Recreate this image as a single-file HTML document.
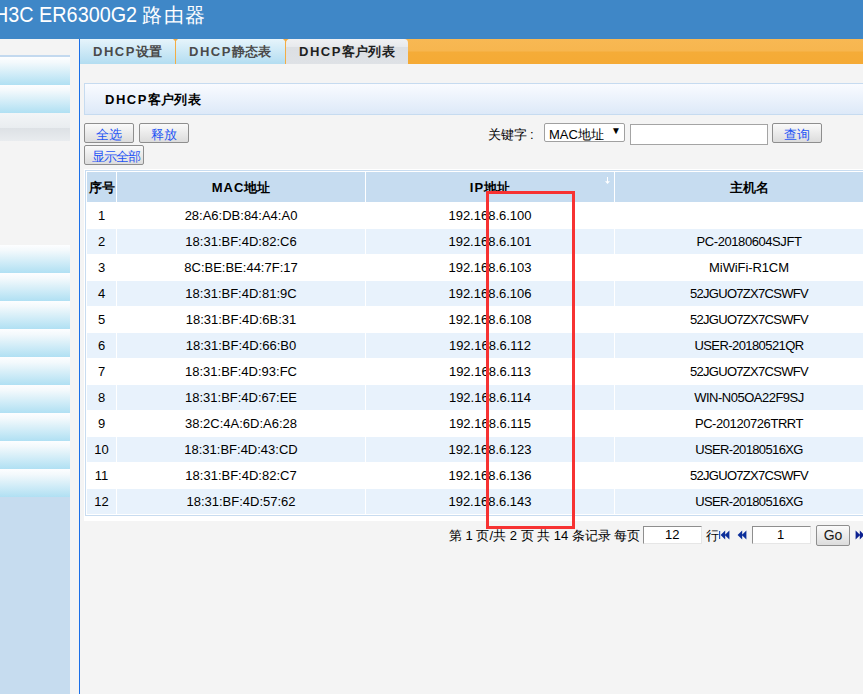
<!DOCTYPE html>
<html><head><meta charset="utf-8">
<style>
*{margin:0;padding:0;box-sizing:border-box}
html,body{width:863px;height:694px;overflow:hidden;background:#f4f4f4;font-family:"Liberation Sans",sans-serif;font-size:12px;color:#000;position:relative}
div{position:absolute}
#hdr{left:0;top:0;width:863px;height:39px;background:#3f87c7;color:#fff;white-space:nowrap;overflow:hidden}
#hdr .lt{position:absolute;left:-6px;top:3px;font-size:22px;line-height:24px;transform-origin:0 0;transform:scaleX(0.90)}
#hdr .cj{position:absolute;left:142px;top:3px;font-size:20px;line-height:24px;letter-spacing:1.5px}
#vline{left:79px;top:39px;width:1px;height:655px;background:#1a6fe8}
.si{left:0;width:70px;height:28px;background:linear-gradient(#fdfeff,#f3f9fc 20%,#b0e0f3)}
#tabbar{left:80px;top:39px;width:783px;height:25px;background:linear-gradient(#f8b853,#f7b64f 48%,#f5ac38 52%,#f5aa35)}
.tab{top:39px;height:25px;background:linear-gradient(#e6f4fb,#b3ddf1)}
.tab.act{background:linear-gradient(#f0f1f3,#e8eaed 30%,#dcdfe3 32%,#dfe2e6);border-radius:4px 4px 0 0}
.tdiv{top:39px;width:1px;height:25px;background:#f3ad45}
.tfl{top:39px;width:5px;height:2px;background:#f3ad45;clip-path:polygon(0 0,100% 0,60% 100%,40% 100%)}
.tt{top:44px;font-weight:bold;font-size:13px;color:#4a4a4a;white-space:nowrap;line-height:16px}
.ls{letter-spacing:1.5px}
.lc{letter-spacing:0.3px}
#sect{left:84px;top:83px;width:790px;height:32px;border:1px solid #c6dbf0;background:linear-gradient(#f9fbff,#dde9f8)}
.btn{height:20px;border:1px solid #8e8e8e;border-radius:2px;background:linear-gradient(#fafafa,#dcdcdc);color:#1f55f5;text-align:center;line-height:18px;font-size:13px;padding-top:2px}
.inp{background:#fff;border:1px solid #a4a4a4}
.inp2{background:#fff;border:1px solid;border-color:#8e8e8e #e6e6e6 #e6e6e6 #8e8e8e}
#wbox{left:84px;top:169px;width:800px;height:352px;background:#fff}
#tbl{left:85px;top:170px;width:800px;border:1px solid #c8dcf0;background:#fff}
table{border-collapse:separate;border-spacing:1px;background:#fff;table-layout:fixed;width:798px}
td,th{height:25px;padding:0;text-align:center;font-size:13px;white-space:nowrap;font-weight:normal}
th{height:30px;background:#c6dcf0;font-weight:bold;font-size:13px;padding-top:2px}
tr.o td{background:#e8f2fc}
#red{left:486px;top:191px;width:89px;height:338px;border:3px solid #f73232}
.pg{top:527px;font-size:13px;white-space:nowrap}
</style></head><body>
<div id="hdr"><span class="lt">H3C ER6300G2</span><span class="cj">路由器</span></div>
<div style="left:0;top:55px;width:70px;height:2px;background:#c3d9ef"></div>
<div class="si" style="top:57px"></div>
<div class="si" style="top:85px"></div>
<div style="left:0;top:113px;width:70px;height:15px;background:linear-gradient(#f3f5f7,#e9edf0)"></div>
<div style="left:0;top:128px;width:70px;height:13px;background:linear-gradient(#dde1e5,#e9ecef)"></div>
<div class="si" style="top:245px"></div><div class="si" style="top:273px"></div><div class="si" style="top:301px"></div><div class="si" style="top:329px"></div><div class="si" style="top:357px"></div><div class="si" style="top:385px"></div><div class="si" style="top:413px"></div><div class="si" style="top:441px"></div><div class="si" style="top:469px"></div>
<div style="left:0;top:497px;width:70px;height:197px;background:#c6dcef"></div>
<div id="vline"></div>
<div id="tabbar"></div>
<div class="tab" style="left:80px;width:95px"></div>
<div class="tab" style="left:176px;width:109px"></div>
<div class="tab act" style="left:286px;width:122px"></div>
<div class="tdiv" style="left:175px"></div><div class="tfl" style="left:173px"></div>
<div class="tdiv" style="left:285px"></div><div class="tfl" style="left:283px"></div>
<div class="tt" style="left:93px"><span class="ls">DHCP</span><span class="lc">设置</span></div>
<div class="tt" style="left:189px"><span class="ls">DHCP</span><span class="lc">静态表</span></div>
<div class="tt" style="left:299px;color:#1e1e1e"><span class="ls">DHCP</span><span class="lc">客户列表</span></div>
<div id="sect"></div>
<div class="tt" style="left:105px;top:92px;color:#000"><span class="ls">DHCP</span><span class="lc">客户列表</span></div>
<div class="btn" style="left:84px;top:123px;width:50px">全选</div>
<div class="btn" style="left:139px;top:123px;width:50px">释放</div>
<div class="btn" style="left:84px;top:145px;width:60px;padding-left:4px;letter-spacing:-1px">显示全部</div>
<div style="left:488px;top:126px;font-size:13px">关键字<span style="margin-left:3px">:</span></div>
<div style="left:544px;top:123px;width:81px;height:19px;background:#fff;border:1px solid #a0a0a0;border-radius:2px"></div>
<div style="left:549px;top:126px;font-size:13px">MAC地址</div>
<div style="left:611px;top:125px;font-size:10px">▼</div>
<div class="inp" style="left:630px;top:124px;width:138px;height:21px"></div>
<div class="btn" style="left:772px;top:123px;width:50px">查询</div>
<div id="wbox"></div>
<div id="tbl">
<table>
<colgroup><col style="width:29px"><col style="width:248px"><col style="width:248px"><col style="width:268px"></colgroup>
<tr><th>序号</th><th><span style="letter-spacing:1px">MAC</span>地址</th><th><span style="letter-spacing:1px">IP</span>地址</th><th>主机名</th></tr>
<tr><td>1</td><td>28:A6:DB:84:A4:A0</td><td>192.168.6.100</td><td style="letter-spacing:0px"></td></tr>
<tr class="o"><td>2</td><td>18:31:BF:4D:82:C6</td><td>192.168.6.101</td><td style="letter-spacing:-0.43px">PC-20180604SJFT</td></tr>
<tr><td>3</td><td>8C:BE:BE:44:7F:17</td><td>192.168.6.103</td><td style="letter-spacing:-0.1px">MiWiFi-R1CM</td></tr>
<tr class="o"><td>4</td><td>18:31:BF:4D:81:9C</td><td>192.168.6.106</td><td style="letter-spacing:-0.71px">52JGUO7ZX7CSWFV</td></tr>
<tr><td>5</td><td>18:31:BF:4D:6B:31</td><td>192.168.6.108</td><td style="letter-spacing:-0.71px">52JGUO7ZX7CSWFV</td></tr>
<tr class="o"><td>6</td><td>18:31:BF:4D:66:B0</td><td>192.168.6.112</td><td style="letter-spacing:-0.57px">USER-20180521QR</td></tr>
<tr><td>7</td><td>18:31:BF:4D:93:FC</td><td>192.168.6.113</td><td style="letter-spacing:-0.71px">52JGUO7ZX7CSWFV</td></tr>
<tr class="o"><td>8</td><td>18:31:BF:4D:67:EE</td><td>192.168.6.114</td><td style="letter-spacing:-0.5px">WIN-N05OA22F9SJ</td></tr>
<tr><td>9</td><td>38:2C:4A:6D:A6:28</td><td>192.168.6.115</td><td style="letter-spacing:-0.43px">PC-20120726TRRT</td></tr>
<tr class="o"><td>10</td><td>18:31:BF:4D:43:CD</td><td>192.168.6.123</td><td style="letter-spacing:-0.64px">USER-20180516XG</td></tr>
<tr><td>11</td><td>18:31:BF:4D:82:C7</td><td>192.168.6.136</td><td style="letter-spacing:-0.71px">52JGUO7ZX7CSWFV</td></tr>
<tr class="o"><td>12</td><td>18:31:BF:4D:57:62</td><td>192.168.6.143</td><td style="letter-spacing:-0.64px">USER-20180516XG</td></tr>
</table>
</div>
<svg style="position:absolute;left:604px;top:176px" width="7" height="9" viewBox="0 0 7 9"><rect x="3" y="1" width="1" height="5" fill="#fff"/><path d="M1 5.3H6L3.5 7.9Z" fill="#fff"/></svg>
<div id="red"></div>
<div class="pg" style="left:449px">第 1 页/共 2 页 共 14 条记录 每页</div>
<div class="inp2" style="left:643px;top:526px;width:59px;height:18px"></div>
<div class="pg" style="left:665px">12</div>
<div class="pg" style="left:706px">行</div>
<svg style="position:absolute;left:718px;top:530px" width="12" height="10" viewBox="0 0 12 10"><rect x="1" y="1" width="1.2" height="8" fill="#2a56b8"/><path d="M2.6 5L7.2 0.6V9.4Z M6.8 5L11.4 0.6V9.4Z" fill="#0b2e9a"/></svg>
<svg style="position:absolute;left:737px;top:530px" width="10" height="10" viewBox="0 0 10 10"><path d="M0.6 5L5.2 0.6V9.4Z M4.8 5L9.4 0.6V9.4Z" fill="#0b2e9a"/></svg>
<svg style="position:absolute;left:855px;top:530px" width="10" height="10" viewBox="0 0 10 10"><path d="M0.6 0.6L5.2 5L0.6 9.4Z M4.8 0.6L9.4 5L4.8 9.4Z" fill="#0b2090"/></svg>
<div class="inp2" style="left:752px;top:526px;width:59px;height:18px"></div>
<div class="pg" style="left:777px">1</div>
<div class="btn" style="left:816px;top:525px;width:34px;height:21px;color:#1a1a1a;font-size:14px;line-height:19px;padding-top:0">Go</div>
</body></html>
